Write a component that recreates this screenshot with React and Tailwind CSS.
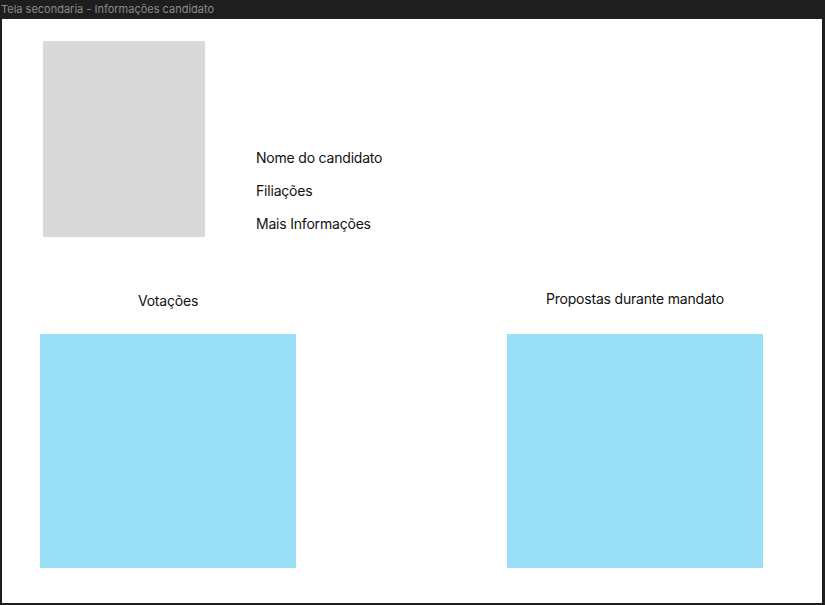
export default function App() {
  return (
    <div className="w-[825px] h-[605px] bg-[#1e1e1e] flex flex-col overflow-hidden" style={{ fontFamily: "Inter, 'Noto Sans', sans-serif" }}>
      <div className="h-[19px] flex items-center pl-[1px] text-[11px] leading-none text-[#8a8a8a]">
        Tela secondaria - Informações candidato
      </div>
      <div className="ml-[2px] w-[820px] h-[584px] bg-white flex flex-col text-[14px] tracking-[-0.2px] text-[#111]">
        <div className="flex mt-[22px] pl-[41px]">
          <div className="w-[162px] h-[196px] bg-[#d9d9d9]" />
          <div className="ml-[51px] pt-[107px] flex flex-col gap-[13px] leading-[20px]">
            <div>Nome do candidato</div>
            <div>Filiações</div>
            <div>Mais Informações</div>
          </div>
        </div>
        <div className="flex justify-between pl-[38px] pr-[59px] mt-[52px]">
          <div className="w-[256px] flex flex-col items-center">
            <div className="leading-[20px] mt-[2px]">Votações</div>
            <div className="mt-[23px] w-[256px] h-[234px] bg-[#99dff5]" />
          </div>
          <div className="w-[256px] flex flex-col items-center">
            <div className="leading-[20px]">Propostas durante mandato</div>
            <div className="mt-[25px] w-[256px] h-[234px] bg-[#99dff5]" />
          </div>
        </div>
      </div>
    </div>
  );
}
